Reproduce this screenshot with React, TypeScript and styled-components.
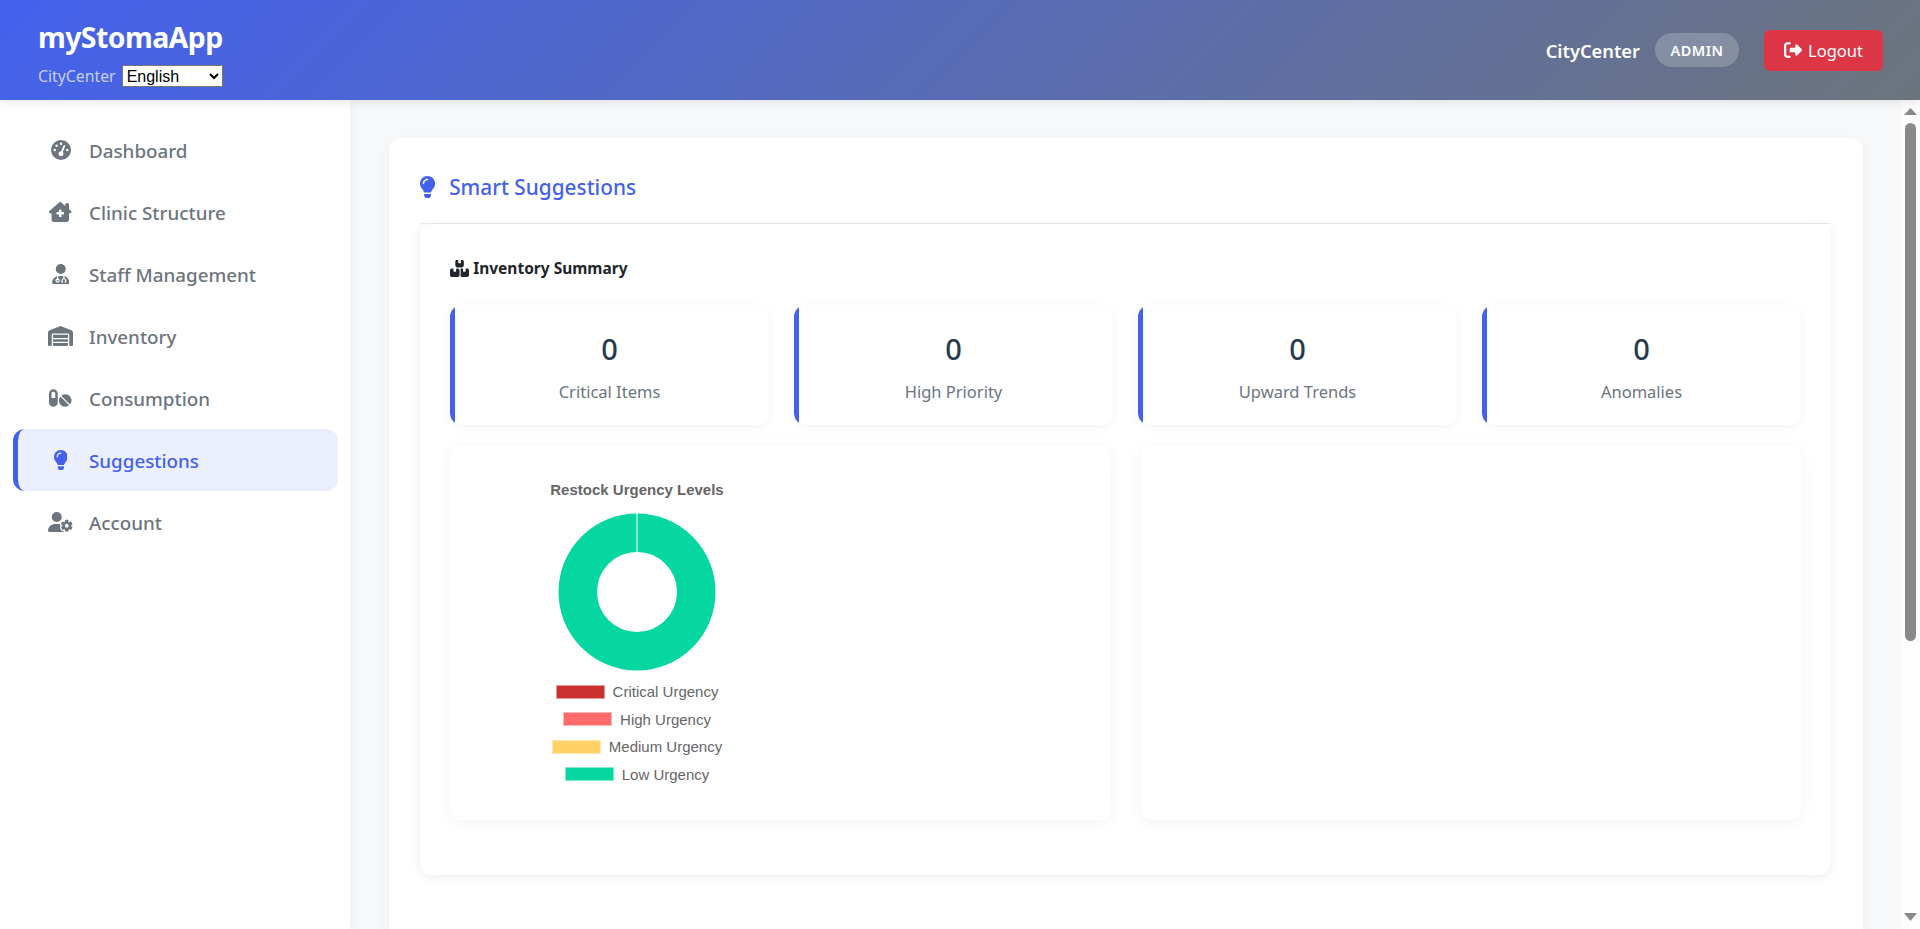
import styled, { createGlobalStyle } from "styled-components";
import type { IconType } from "react-icons";
import { FaLightbulb } from "react-icons/fa";
import {
    FaBoxesStacked,
    FaGaugeHigh,
    FaHouseChimneyMedical,
    FaPills,
    FaRightFromBracket,
    FaUserDoctor,
    FaUserGear,
    FaWarehouse,
} from "react-icons/fa6";

const GlobalStyle = createGlobalStyle`
    html, body {
        margin: 0;
        height: 100%;
        overflow: hidden;
    }
    body {
        font-family: "Noto Sans", "Open Sans", sans-serif;
        background: #f8f9fa;
    }
    * {
        box-sizing: border-box;
    }
`;

// react-icons draws every icon in a square, font awesome glyphs are wider or narrower
const faIcon = (Icon: IconType, viewWidth: number) => styled(Icon)`
    height: 1em;
    width: ${viewWidth / 512}em;
    flex: none;
`;

const GaugeIcon = faIcon(FaGaugeHigh, 512);
const ClinicIcon = faIcon(FaHouseChimneyMedical, 576);
const DoctorIcon = faIcon(FaUserDoctor, 448);
const WarehouseIcon = faIcon(FaWarehouse, 640);
const PillsIcon = faIcon(FaPills, 576);
const BulbIcon = faIcon(FaLightbulb, 352);
const UserGearIcon = faIcon(FaUserGear, 640);
const BoxesIcon = faIcon(FaBoxesStacked, 576);
const LogoutIcon = faIcon(FaRightFromBracket, 512);

const Shell = styled.div`
    height: 100vh;
    display: flex;
    flex-direction: column;
`;

const Header = styled.header`
    height: 100px;
    flex: none;
    position: relative;
    z-index: 2;
    display: flex;
    align-items: center;
    justify-content: space-between;
    padding: 0 37px 0 38px;
    background: linear-gradient(135deg, #4361ee, #6c757d);
    box-shadow: 0 2px 10px rgba(0, 0, 0, 0.1);
    color: #fff;
`;

const Brand = styled.div`
    display: flex;
    flex-direction: column;
    gap: 10px;
    padding-top: 6px;
`;

const Logo = styled.div`
    font-size: 28.5px;
    font-weight: 700;
    line-height: 36px;
    letter-spacing: -0.6px;
`;

const BrandRow = styled.div`
    display: flex;
    align-items: center;
    gap: 6px;
    font-size: 15.8px;
    color: rgba(255, 255, 255, 0.7);
`;

const LangSelect = styled.select`
    width: 101px;
    height: 22px;
    background: #fff;
    border: 1px solid #767676;
    border-radius: 0;
    color: #000;
    font-family: "Liberation Sans", sans-serif;
    font-size: 16px;
`;

const UserBox = styled.div`
    display: flex;
    align-items: center;
`;

const UserName = styled.span`
    font-size: 18.3px;
    font-weight: 600;
    margin-right: 15px;
`;

const RoleBadge = styled.span`
    width: 84px;
    height: 34px;
    margin-right: 25px;
    display: flex;
    align-items: center;
    justify-content: center;
    border-radius: 17px;
    background: rgba(255, 255, 255, 0.2);
    font-size: 14.5px;
    font-weight: 600;
    letter-spacing: 0.5px;
`;

const LogoutButton = styled.button`
    width: 119px;
    height: 41px;
    display: flex;
    align-items: center;
    justify-content: center;
    gap: 6px;
    border: none;
    border-radius: 6px;
    background: #dc3545;
    color: #fff;
    font-family: inherit;
    font-size: 16.5px;

    svg {
        font-size: 18px;
    }
`;

const Body = styled.div`
    flex: 1;
    min-height: 0;
    display: flex;
`;

const Sidebar = styled.nav`
    width: 350px;
    flex: none;
    position: relative;
    z-index: 1;
    padding: 19px 12px 0 13px;
    background: #fff;
    box-shadow: 2px 0 15px rgba(0, 0, 0, 0.05);
`;

const NavItem = styled.div<{ $active?: boolean }>`
    height: 62px;
    display: flex;
    align-items: center;
    padding-left: 30px;
    border-left: 5px solid ${(p) => (p.$active ? "#4361ee" : "transparent")};
    border-radius: 12px;
    background: ${(p) => (p.$active ? "rgba(67, 97, 238, 0.1)" : "transparent")};
    color: ${(p) => (p.$active ? "#4361ee" : "#6c757d")};
    font-size: 18.8px;
    font-weight: 500;
`;

const NavIcon = styled.span`
    width: 25px;
    margin-right: 16px;
    display: flex;
    justify-content: center;
    font-size: 20px;
`;

const NavLabel = styled.span`
    padding-top: 2px;
`;

const Main = styled.main`
    flex: 1;
    min-width: 0;
    overflow: hidden;
    padding: 38px 38px 40px 39px;
`;

const ScrollRail = styled.div`
    width: 19px;
    flex: none;
    display: flex;
    flex-direction: column;
    align-items: center;
    background: #fdfdfd;
`;

const ScrollArrow = styled.svg<{ $down?: boolean }>`
    display: block;
    flex: none;
    margin-top: ${(p) => (p.$down ? "auto" : "8px")};
    margin-bottom: ${(p) => (p.$down ? "8px" : "0")};
`;

const ScrollThumb = styled.div`
    width: 11px;
    height: 518px;
    margin-top: 8px;
    border-radius: 6px;
    background: #898989;
`;

const PageCard = styled.section`
    height: 1165px;
    padding: 30px 32px 30px 31px;
    border-radius: 12px;
    background: #fff;
    box-shadow: 0 4px 20px rgba(0, 0, 0, 0.05);
`;

const PageTitle = styled.h2`
    height: 56px;
    margin: 0;
    padding-bottom: 17px;
    display: flex;
    align-items: center;
    gap: 14px;
    border-bottom: 1px solid #e9ecef;
    color: #4361ee;
    font-size: 20.8px;
    font-weight: 500;

    svg {
        font-size: 22px;
    }
`;

const SummaryCard = styled.div`
    padding: 30px 30px 55px;
    border-radius: 12px;
    background: #fff;
    box-shadow: 0 2px 10px rgba(0, 0, 0, 0.08);
`;

const SummaryTitle = styled.h3`
    height: 28px;
    margin: 0 0 23px;
    display: flex;
    align-items: center;
    gap: 4px;
    color: #212529;
    font-size: 15.5px;
    font-weight: 700;

    svg {
        font-size: 17px;
    }
`;

const StatGrid = styled.div`
    display: grid;
    grid-template-columns: repeat(4, 1fr);
    gap: 25px;
`;

const StatCard = styled.div`
    height: 120px;
    position: relative;
    overflow: hidden;
    display: flex;
    flex-direction: column;
    align-items: center;
    border-radius: 12px;
    background: #fff;
    box-shadow: 0 2px 10px rgba(0, 0, 0, 0.05);

    &::before {
        content: "";
        position: absolute;
        left: 0;
        top: 0;
        bottom: 0;
        width: 5px;
        background: #4361ee;
    }
`;

const StatValue = styled.div`
    margin-top: 22px;
    color: #2b3a4a;
    font-size: 29px;
    font-weight: 500;
    line-height: 44px;
`;

const StatLabel = styled.div`
    margin-top: 9px;
    color: #6c757d;
    font-size: 16.5px;
    line-height: 24px;
`;

const ChartGrid = styled.div`
    margin-top: 20px;
    display: grid;
    grid-template-columns: repeat(2, 1fr);
    gap: 30px;
`;

const ChartCard = styled.div`
    height: 375px;
    padding: 35px 20px 0;
    border-radius: 12px;
    background: #fff;
    box-shadow: 0 2px 15px rgba(0, 0, 0, 0.05);
`;

const ChartBox = styled.div`
    width: 334px;
    display: flex;
    flex-direction: column;
    align-items: center;
    font-family: "Liberation Sans", Arial, sans-serif;
    color: #666;
`;

const ChartTitle = styled.div`
    font-size: 15px;
    font-weight: 700;
    line-height: 20px;
`;

const Donut = styled.svg`
    display: block;
    margin: 13px 0 7px;
`;

const LegendRow = styled.div`
    height: 27.5px;
    display: flex;
    align-items: center;
    gap: 8px;
    font-size: 15px;
`;

const Swatch = styled.span<{ $color: string }>`
    width: 49px;
    height: 14px;
    border: 1px solid rgba(255, 255, 255, 0.5);
    background: ${(p) => p.$color};
`;

const navItems = [
    { label: "Dashboard", icon: <GaugeIcon /> },
    { label: "Clinic Structure", icon: <ClinicIcon /> },
    { label: "Staff Management", icon: <DoctorIcon /> },
    { label: "Inventory", icon: <WarehouseIcon /> },
    { label: "Consumption", icon: <PillsIcon /> },
    { label: "Suggestions", icon: <BulbIcon />, active: true },
    { label: "Account", icon: <UserGearIcon /> },
];

const stats = ["Critical Items", "High Priority", "Upward Trends", "Anomalies"];

const legend = [
    { label: "Critical Urgency", color: "#c9302f" },
    { label: "High Urgency", color: "#ff6b6b" },
    { label: "Medium Urgency", color: "#ffd166" },
    { label: "Low Urgency", color: "#06d6a0" },
];

export default function App() {
    return (
        <Shell>
            <GlobalStyle />
            <Header>
                <Brand>
                    <Logo>myStomaApp</Logo>
                    <BrandRow>
                        CityCenter
                        <LangSelect defaultValue="en">
                            <option value="en">English</option>
                            <option value="fr">Français</option>
                        </LangSelect>
                    </BrandRow>
                </Brand>
                <UserBox>
                    <UserName>CityCenter</UserName>
                    <RoleBadge>ADMIN</RoleBadge>
                    <LogoutButton>
                        <LogoutIcon />
                        Logout
                    </LogoutButton>
                </UserBox>
            </Header>
            <Body>
                <Sidebar>
                    {navItems.map((item) => (
                        <NavItem key={item.label} $active={item.active}>
                            <NavIcon>{item.icon}</NavIcon>
                            <NavLabel>{item.label}</NavLabel>
                        </NavItem>
                    ))}
                </Sidebar>
                <Main>
                    <PageCard>
                        <PageTitle>
                            <BulbIcon />
                            Smart Suggestions
                        </PageTitle>
                        <SummaryCard>
                            <SummaryTitle>
                                <BoxesIcon />
                                Inventory Summary
                            </SummaryTitle>
                            <StatGrid>
                                {stats.map((label) => (
                                    <StatCard key={label}>
                                        <StatValue>0</StatValue>
                                        <StatLabel>{label}</StatLabel>
                                    </StatCard>
                                ))}
                            </StatGrid>
                            <ChartGrid>
                                <ChartCard>
                                    <ChartBox>
                                        <ChartTitle>Restock Urgency Levels</ChartTitle>
                                        <Donut width="158" height="158" viewBox="0 0 158 158">
                                            <circle cx="79" cy="79" r="59.25" fill="none" stroke="#06d6a0" strokeWidth="38.5" />
                                            <line x1="79" y1="0" x2="79" y2="40" stroke="#fff" strokeWidth="1" />
                                        </Donut>
                                        {legend.map((row) => (
                                            <LegendRow key={row.label}>
                                                <Swatch $color={row.color} />
                                                {row.label}
                                            </LegendRow>
                                        ))}
                                    </ChartBox>
                                </ChartCard>
                                <ChartCard />
                            </ChartGrid>
                        </SummaryCard>
                    </PageCard>
                </Main>
                <ScrollRail>
                    <ScrollArrow width="13" height="7" viewBox="0 0 13 7">
                        <path d="M0 7L6.5 0 13 7z" fill="#898989" />
                    </ScrollArrow>
                    <ScrollThumb />
                    <ScrollArrow $down width="13" height="8" viewBox="0 0 13 8">
                        <path d="M0 0L6.5 8 13 0z" fill="#898989" />
                    </ScrollArrow>
                </ScrollRail>
            </Body>
        </Shell>
    );
}
